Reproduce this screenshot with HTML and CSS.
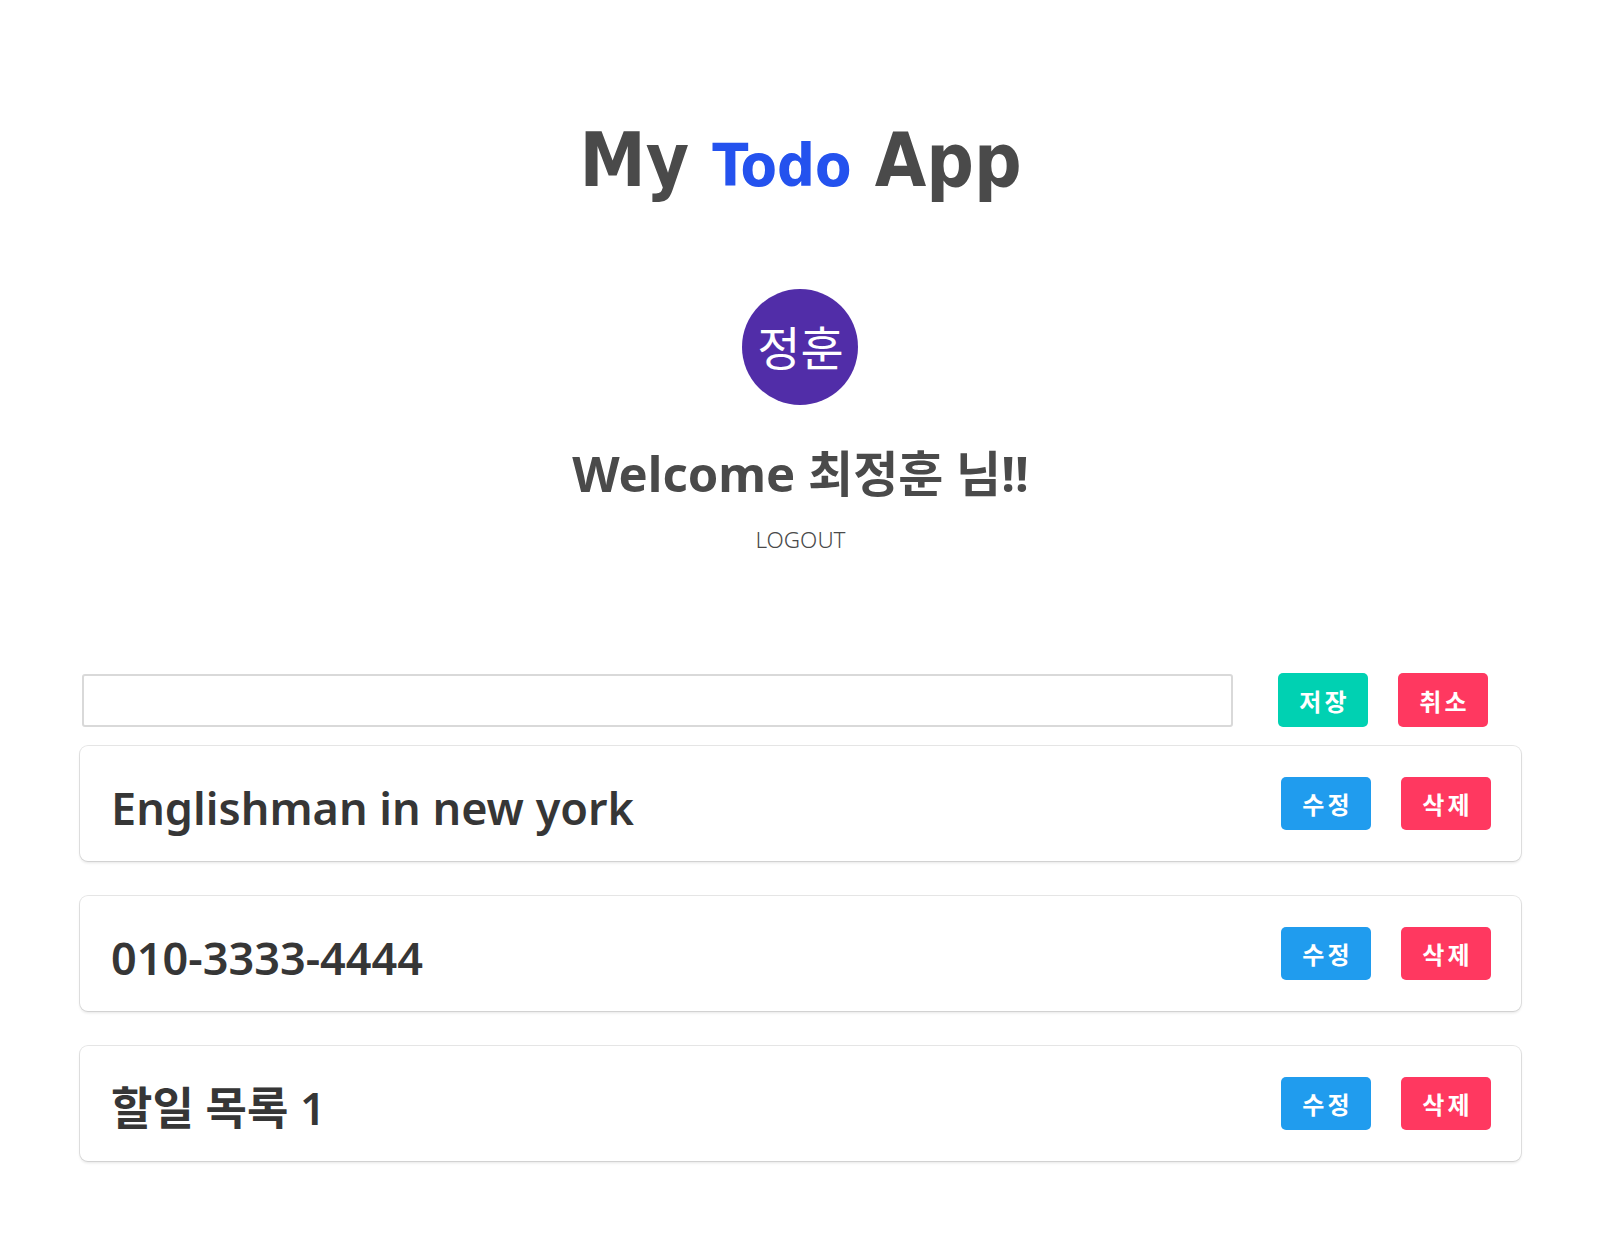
FILE: index.html
```html
<!DOCTYPE html>
<html lang="ko">
<head>
<meta charset="utf-8">
<title>My Todo App</title>
<link rel="stylesheet" href="styles.css">
</head>
<body>
<div class="page">
  <header class="hero">
    <h1 class="app-title">My <span class="accent">Todo</span> App</h1>
    <div class="avatar">정훈</div>
    <h2 class="welcome">Welcome 최정훈 님!!</h2>
    <a class="logout" href="#">LOGOUT</a>
  </header>
  <main class="todo">
    <div class="entry-row">
      <input class="entry-input" type="text">
      <div class="actions entry-actions">
        <button class="btn btn-save">저장</button>
        <button class="btn btn-cancel">취소</button>
      </div>
    </div>
    <ul class="todo-list">
      <li class="todo-card">
        <span class="todo-text">Englishman in new york</span>
        <div class="actions">
          <button class="btn btn-edit">수정</button>
          <button class="btn btn-delete">삭제</button>
        </div>
      </li>
      <li class="todo-card">
        <span class="todo-text">010-3333-4444</span>
        <div class="actions">
          <button class="btn btn-edit">수정</button>
          <button class="btn btn-delete">삭제</button>
        </div>
      </li>
      <li class="todo-card">
        <span class="todo-text">할일 목록 1</span>
        <div class="actions">
          <button class="btn btn-edit">수정</button>
          <button class="btn btn-delete">삭제</button>
        </div>
      </li>
    </ul>
  </main>
</div>
</body>
</html>
```

FILE: styles.css
```css
* { box-sizing: border-box; }

html, body {
  margin: 0;
  padding: 0;
  background: #ffffff;
}

body {
  font-family: "Noto Sans", "Noto Sans CJK KR", sans-serif;
  color: #4a4a4a;
}

.page {
  width: 90%;
  margin: 0 auto;
  padding-top: 123px;
  padding-bottom: 60px;
}

.hero {
  display: flex;
  flex-direction: column;
  align-items: center;
}

.app-title {
  margin: 0;
  font-family: "DejaVu Sans Condensed", "DejaVu Sans", sans-serif;
  font-stretch: condensed;
  font-weight: bold;
  font-size: 74px;
  line-height: 74px;
  color: #4a4a4a;
  letter-spacing: 0;
}

.app-title .accent {
  color: #2452ee;
  font-size: 59px;
}

.avatar {
  margin-top: 86px;
  width: 116px;
  height: 116px;
  border-radius: 50%;
  background: #512da8;
  color: #ffffff;
  display: flex;
  align-items: center;
  justify-content: center;
  font-family: "Noto Sans CJK KR", sans-serif;
  font-size: 47px;
  font-weight: 400;
  padding-bottom: 3px;
}

.welcome {
  margin: 38px 0 0;
  font-family: "Noto Sans", "Noto Sans CJK KR", sans-serif;
  font-size: 49px;
  line-height: 60px;
  font-weight: 700;
  color: #4a4a4a;
}

.logout {
  margin-top: 24px;
  font-family: "Noto Sans", "Noto Sans CJK KR", sans-serif;
  font-weight: 300;
  font-size: 22.5px;
  line-height: 26px;
  color: #4a4a4a;
  text-decoration: none;
}

.todo {
  margin-top: 120px;
}

.entry-row {
  display: flex;
  align-items: center;
  padding-left: 2px;
  padding-right: 33px;
}

.entry-input {
  flex: 1;
  height: 53px;
  border: 2px solid #d9d9d9;
  border-radius: 3px;
  background: #fff;
  font-size: 20px;
  margin-right: 45px;
}

.actions {
  display: flex;
  gap: 30px;
}

.btn {
  width: 90px;
  height: 53px;
  border: none;
  border-radius: 5px;
  color: #ffffff;
  font-family: "Noto Sans CJK KR", sans-serif;
  font-weight: 700;
  font-size: 24px;
  letter-spacing: 3px;
  text-indent: 3px;
  padding: 0;
  cursor: pointer;
}

.btn-save { background: #00d1b2; height: 54px; }
.btn-cancel { background: #ff3860; height: 54px; }
.btn-edit { background: #209cee; }
.btn-delete { background: #ff3860; }

.todo-list {
  list-style: none;
  margin: 19px 0 0;
  padding: 0;
  display: flex;
  flex-direction: column;
  gap: 35px;
}

.todo-card {
  display: flex;
  align-items: center;
  justify-content: space-between;
  padding: 31px 30px 31px 31px;
  border-radius: 8px;
  background: #fff;
  box-shadow: 0 2px 3px rgba(10, 10, 10, 0.1), 0 0 0 1px rgba(10, 10, 10, 0.1);
}

.todo-text {
  font-family: "Noto Sans", "Noto Sans CJK KR", sans-serif;
  font-size: 45px;
  line-height: 45px;
  padding-top: 8px;
  font-weight: 600;
  color: #363636;
}
```
